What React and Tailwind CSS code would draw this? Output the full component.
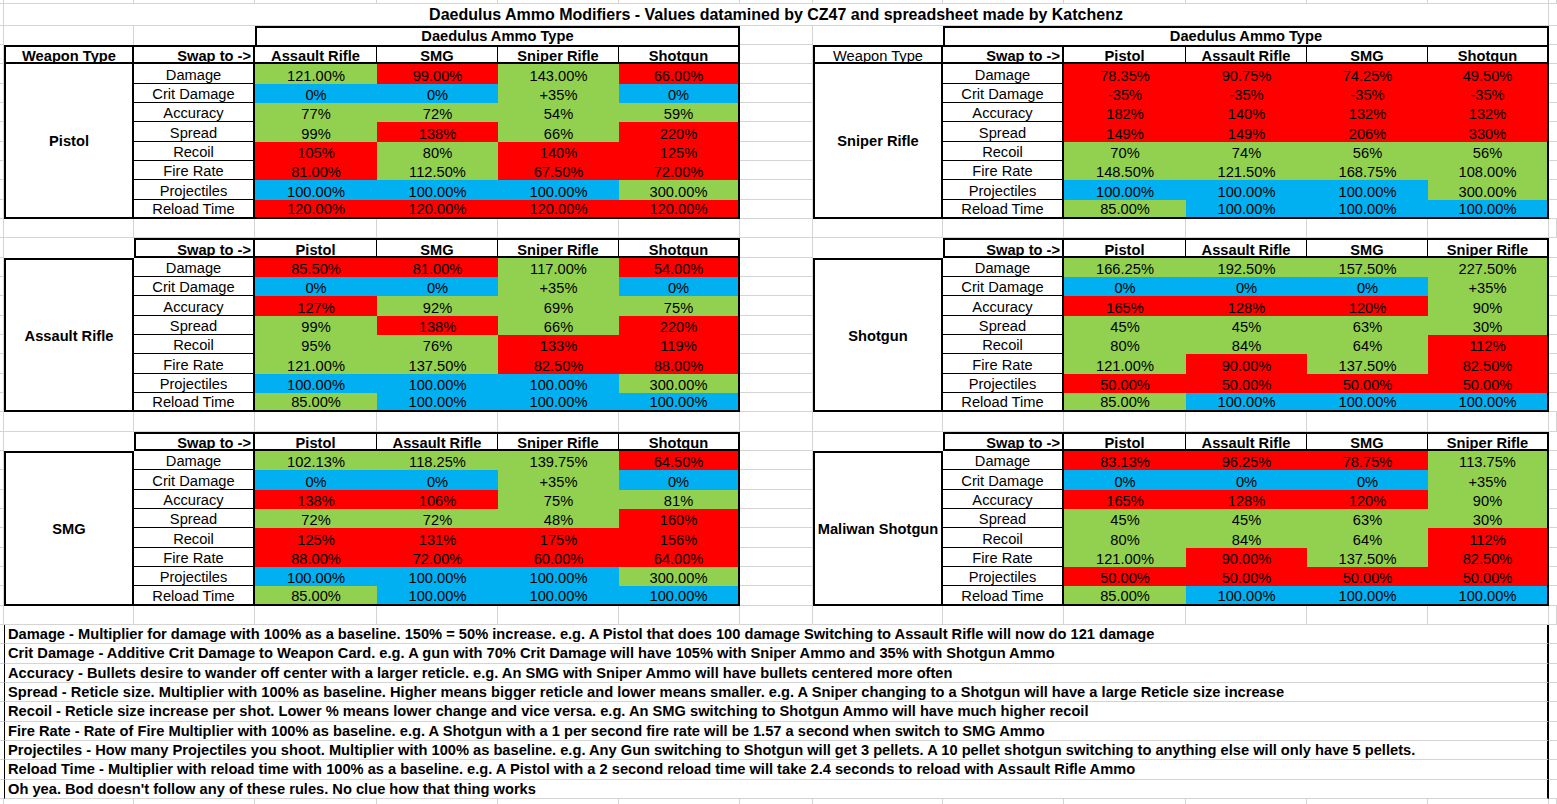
const F = "font-['Liberation_Sans',Arial,sans-serif]";
const GL = 'border-[#d4d4d4]';
const FILL = { G: 'bg-[#92d050]', R: 'bg-[#ff0000]', B: 'bg-[#00b0f0]' };
const COLS = ['w-[4px]', 'w-[130px]', 'w-[121px]', 'w-[122px]', 'w-[121px]', 'w-[121px]', 'w-[121px]', 'w-[73px]', 'w-[130px]', 'w-[121px]', 'w-[122px]', 'w-[121px]', 'w-[121px]', 'w-[121px]', 'w-[8px]'];
const DW = ['w-[122px]', 'w-[121px]', 'w-[121px]', 'w-[121px]'];
const LABELS = ['Damage', 'Crit Damage', 'Accuracy', 'Spread', 'Recoil', 'Fire Rate', 'Projectiles', 'Reload Time'];

// excel rows at this zoom are 19.33px, so every third one is 20
const hc = (k) => (k % 3 === 1 ? 'h-[20px]' : 'h-[19px]');
const parse = (s) => s.split(' ').map((x) => x.split(':'));

const LEFT = [
  {
    weapon: 'Pistol',
    cols: ['Assault Rifle', 'SMG', 'Sniper Rifle', 'Shotgun'],
    rows: [
      '121.00%:G 99.00%:R 143.00%:G 66.00%:R',
      '0%:B 0%:B +35%:G 0%:B',
      '77%:G 72%:G 54%:G 59%:G',
      '99%:G 138%:R 66%:G 220%:R',
      '105%:R 80%:G 140%:R 125%:R',
      '81.00%:R 112.50%:G 67.50%:R 72.00%:R',
      '100.00%:B 100.00%:B 100.00%:B 300.00%:G',
      '120.00%:R 120.00%:R 120.00%:R 120.00%:R',
    ],
  },
  {
    weapon: 'Assault Rifle',
    cols: ['Pistol', 'SMG', 'Sniper Rifle', 'Shotgun'],
    rows: [
      '85.50%:R 81.00%:R 117.00%:G 54.00%:R',
      '0%:B 0%:B +35%:G 0%:B',
      '127%:R 92%:G 69%:G 75%:G',
      '99%:G 138%:R 66%:G 220%:R',
      '95%:G 76%:G 133%:R 119%:R',
      '121.00%:G 137.50%:G 82.50%:R 88.00%:R',
      '100.00%:B 100.00%:B 100.00%:B 300.00%:G',
      '85.00%:G 100.00%:B 100.00%:B 100.00%:B',
    ],
  },
  {
    weapon: 'SMG',
    cols: ['Pistol', 'Assault Rifle', 'Sniper Rifle', 'Shotgun'],
    rows: [
      '102.13%:G 118.25%:G 139.75%:G 64.50%:R',
      '0%:B 0%:B +35%:G 0%:B',
      '138%:R 106%:R 75%:G 81%:G',
      '72%:G 72%:G 48%:G 160%:R',
      '125%:R 131%:R 175%:R 156%:R',
      '88.00%:R 72.00%:R 60.00%:R 64.00%:R',
      '100.00%:B 100.00%:B 100.00%:B 300.00%:G',
      '85.00%:G 100.00%:B 100.00%:B 100.00%:B',
    ],
  },
];

const RIGHT = [
  {
    weapon: 'Sniper Rifle',
    cols: ['Pistol', 'Assault Rifle', 'SMG', 'Shotgun'],
    rows: [
      '78.35%:R 90.75%:R 74.25%:R 49.50%:R',
      '-35%:R -35%:R -35%:R -35%:R',
      '182%:R 140%:R 132%:R 132%:R',
      '149%:R 149%:R 206%:R 330%:R',
      '70%:G 74%:G 56%:G 56%:G',
      '148.50%:G 121.50%:G 168.75%:G 108.00%:G',
      '100.00%:B 100.00%:B 100.00%:B 300.00%:G',
      '85.00%:G 100.00%:B 100.00%:B 100.00%:B',
    ],
  },
  {
    weapon: 'Shotgun',
    cols: ['Pistol', 'Assault Rifle', 'SMG', 'Sniper Rifle'],
    rows: [
      '166.25%:G 192.50%:G 157.50%:G 227.50%:G',
      '0%:B 0%:B 0%:B +35%:G',
      '165%:R 128%:R 120%:R 90%:G',
      '45%:G 45%:G 63%:G 30%:G',
      '80%:G 84%:G 64%:G 112%:R',
      '121.00%:G 90.00%:R 137.50%:G 82.50%:R',
      '50.00%:R 50.00%:R 50.00%:R 50.00%:R',
      '85.00%:G 100.00%:B 100.00%:B 100.00%:B',
    ],
  },
  {
    weapon: 'Maliwan Shotgun',
    cols: ['Pistol', 'Assault Rifle', 'SMG', 'Sniper Rifle'],
    rows: [
      '83.13%:R 96.25%:R 78.75%:R 113.75%:G',
      '0%:B 0%:B 0%:B +35%:G',
      '165%:R 128%:R 120%:R 90%:G',
      '45%:G 45%:G 63%:G 30%:G',
      '80%:G 84%:G 64%:G 112%:R',
      '121.00%:G 90.00%:R 137.50%:G 82.50%:R',
      '50.00%:R 50.00%:R 50.00%:R 50.00%:R',
      '85.00%:G 100.00%:B 100.00%:B 100.00%:B',
    ],
  },
];

const NOTES = [
  'Damage - Multiplier for damage with 100% as a baseline. 150% = 50% increase. e.g. A Pistol that does 100 damage Switching to Assault Rifle will now do 121 damage',
  'Crit Damage - Additive Crit Damage to Weapon Card. e.g. A gun with 70% Crit Damage will have 105% with Sniper Ammo and 35% with Shotgun Ammo',
  'Accuracy - Bullets desire to wander off center with a larger reticle. e.g. An SMG with Sniper Ammo will have bullets centered more often',
  'Spread - Reticle size. Multiplier with 100% as baseline. Higher means bigger reticle and lower means smaller. e.g. A Sniper changing to a Shotgun will have a large Reticle size increase',
  'Recoil - Reticle size increase per shot. Lower % means lower change and vice versa. e.g. An SMG switching to Shotgun Ammo will have much higher recoil',
  'Fire Rate - Rate of Fire Multiplier with 100% as baseline. e.g. A Shotgun with a 1 per second fire rate will be 1.57 a second when switch to SMG Ammo',
  'Projectiles - How many Projectiles you shoot. Multiplier with 100% as baseline. e.g. Any Gun switching to Shotgun will get 3 pellets. A 10 pellet shotgun switching to anything else will only have 5 pellets.',
  'Reload Time - Multiplier with reload time with 100% as a baseline. e.g. A Pistol with a 2 second reload time will take 2.4 seconds to reload with Assault Rifle Ammo',
  "Oh yea. Bod doesn't follow any of these rules. No clue how that thing works",
];

function BlankRow({ h, noBottom }) {
  return (
    <div className={`flex ${h}`}>
      {COLS.map((w, i) => (
        <div key={i} className={`${w} shrink-0 border-r ${noBottom ? '' : 'border-b'} ${GL}`} />
      ))}
    </div>
  );
}

function Strip({ w, hs, right = true }) {
  return (
    <div className={`${w} shrink-0 flex flex-col`}>
      {hs.map((h, i) => (
        <div key={i} className={`${h} shrink-0 border-b ${right ? 'border-r' : ''} ${GL}`} />
      ))}
    </div>
  );
}

function Table({ t, hk, dk, first, wideAmmo, regularHead }) {
  return (
    <div className="flex w-[736px] shrink-0 flex-col">
      {first && (
        <div className="flex h-[19px]">
          <div className={`w-[130px] shrink-0 ${wideAmmo ? '' : `border-r ${GL}`}`} />
          {!wideAmmo && <div className="w-[121px] shrink-0" />}
          <div className="flex flex-1 items-end justify-center border-x-2 border-t-2 border-black pb-[1px] font-bold">
            Daedulus Ammo Type
          </div>
        </div>
      )}
      <div className={`flex ${hc(hk)} leading-[12px]`}>
        {first ? (
          <div
            className={`flex w-[130px] shrink-0 items-end justify-center border-2 border-black ${
              regularHead ? '' : 'font-bold'
            }`}
          >
            Weapon Type
          </div>
        ) : (
          <div className="w-[130px] shrink-0" />
        )}
        <div
          className={`flex w-[121px] shrink-0 items-end justify-end border-y-2 border-r-2 border-black pr-[2px] font-bold ${
            first ? '' : 'border-l-2'
          }`}
        >
          Swap to -&gt;
        </div>
        {t.cols.map((c, i) => (
          <div
            key={c}
            className={`${DW[i]} flex shrink-0 items-end justify-center border-y-2 border-black font-bold ${
              i === 3 ? 'border-r-2' : 'border-r'
            }`}
          >
            {c}
          </div>
        ))}
      </div>
      <div className="flex">
        <div
          className={`flex w-[130px] shrink-0 items-center justify-center border-x-2 border-b-2 border-black pt-[2px] font-bold ${
            first ? '' : 'border-t-2'
          }`}
        >
          {t.weapon}
        </div>
        <div className="flex flex-col">
          {LABELS.map((lab, r) => {
            const last = r === 7;
            return (
              <div key={lab} className={`flex ${hc(dk + r)}`}>
                <div
                  className={`flex w-[121px] shrink-0 items-end justify-center border-r-2 border-black ${
                    last ? 'border-b-2' : 'border-b'
                  }`}
                >
                  {lab}
                </div>
                {parse(t.rows[r]).map(([v, c], i) => (
                  <div
                    key={i}
                    className={`${DW[i]} ${FILL[c]} flex shrink-0 items-end justify-center border-black ${
                      i === 3 ? 'border-r-2' : ''
                    } ${last ? 'border-b-2' : ''}`}
                  >
                    {v}
                  </div>
                ))}
              </div>
            );
          })}
        </div>
      </div>
    </div>
  );
}

function Band({ left, right, hk, dk, first }) {
  const hs = [];
  if (first) hs.push('h-[19px]');
  hs.push(hc(hk));
  for (let r = 0; r < 8; r++) hs.push(hc(dk + r));
  return (
    <div className="flex">
      <Strip w="w-[4px]" hs={hs} />
      <Table t={left} hk={hk} dk={dk} first={first} />
      <Strip w="w-[73px]" hs={hs} />
      <Table t={right} hk={hk} dk={dk} first={first} wideAmmo regularHead />
      <Strip w="w-[8px]" hs={hs} right={false} />
    </div>
  );
}

export default function App() {
  return (
    <div className={`h-[804px] w-[1557px] overflow-hidden bg-white text-[14.67px] leading-none text-black ${F}`}>
      <BlankRow h="h-[4px]" />
      <div className="flex h-[22px]">
        <div className={`w-[4px] shrink-0 border-r border-b ${GL}`} />
        <div className={`flex w-[1545px] shrink-0 items-end justify-center border-r border-b pb-[2px] text-[16px] font-bold ${GL}`}>
          Daedulus Ammo Modifiers - Values datamined by CZ47 and spreadsheet made by Katchenz
        </div>
        <div className={`w-[8px] shrink-0 border-b ${GL}`} />
      </div>
      <Band left={LEFT[0]} right={RIGHT[0]} hk={0} dk={1} first />
      <BlankRow h={hc(9)} />
      <Band left={LEFT[1]} right={RIGHT[1]} hk={10} dk={11} />
      <BlankRow h={hc(19)} />
      <Band left={LEFT[2]} right={RIGHT[2]} hk={20} dk={21} />
      <BlankRow h={hc(29)} />
      {NOTES.map((n, i) => (
        <div key={i} className={`flex ${hc(30 + i)}`}>
          <div className={`w-[4px] shrink-0 border-b ${GL}`} />
          <div className="flex w-[1545px] shrink-0 items-center whitespace-nowrap border-b border-l border-r-2 border-b-[#d4d4d4] border-l-black border-r-black pl-[3px] font-bold">
            {n}
          </div>
          <div className={`w-[8px] shrink-0 border-b ${GL}`} />
        </div>
      ))}
      <BlankRow h="h-[5px]" noBottom />
    </div>
  );
}
